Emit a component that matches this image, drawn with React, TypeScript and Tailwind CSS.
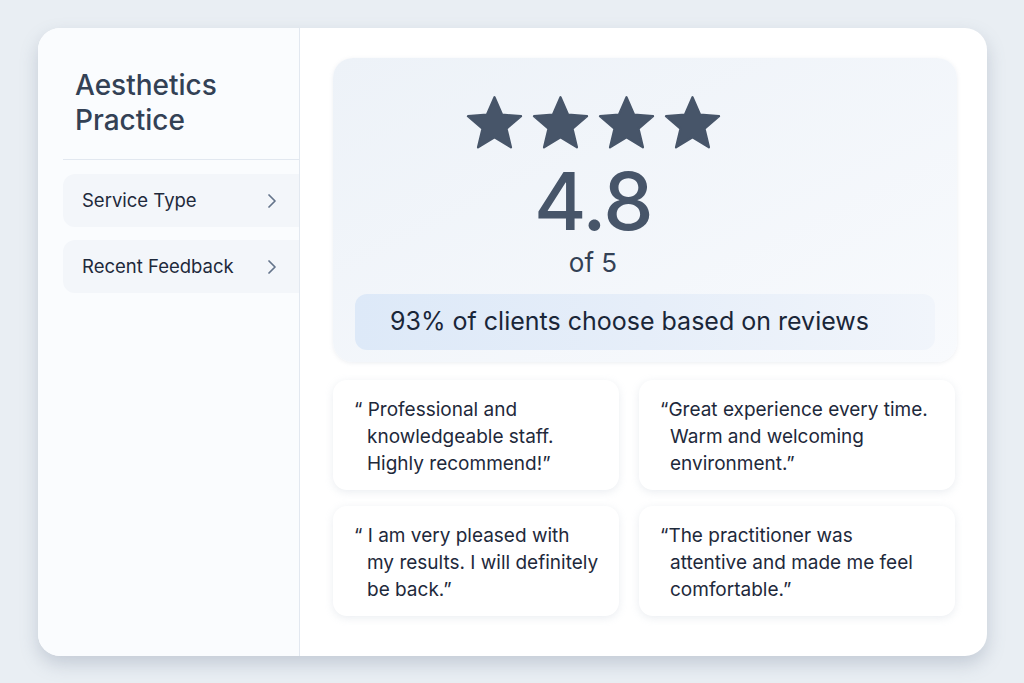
import React from 'react';
import { ChevronRight } from 'lucide-react';

const reviews = [
  {
    open: '“ ',
    lines: ['Professional and', 'knowledgeable staff.', 'Highly recommend!”'],
    indent: 'pl-[13px] -indent-[13px]',
  },
  {
    open: '“',
    lines: ['Great experience every time.', 'Warm and welcoming', 'environment.”'],
    indent: 'pl-[10px] -indent-[10px]',
  },
  {
    open: '“ ',
    lines: ['I am very pleased with', 'my results. I will definitely', 'be back.”'],
    indent: 'pl-[13px] -indent-[13px]',
  },
  {
    open: '“',
    lines: ['The practitioner was', 'attentive and made me feel', 'comfortable.”'],
    indent: 'pl-[10px] -indent-[10px]',
  },
];

function Star() {
  return (
    <svg viewBox="0 0 24 23" className="w-[59px] h-[57px]" aria-hidden="true">
      <path
        d="M12 1.2l3.1 7.1 7.7.6-5.9 5.1 1.8 7.6L12 17.5l-6.7 4.1 1.8-7.6-5.9-5.1 7.7-.6z"
        fill="#475569"
        stroke="#475569"
        strokeWidth="0.9"
        strokeLinejoin="round"
      />
    </svg>
  );
}

function NavItem({ label }: { label: string }) {
  return (
    <div className="flex items-center justify-between h-[53px] pl-[19px] pr-[15px] rounded-l-xl bg-[#f3f6fa]">
      <span className="text-[18.5px] text-[#1e293b]">{label}</span>
      <ChevronRight className="w-6 h-6 text-[#64748b]" strokeWidth={1.75} />
    </div>
  );
}

export default function App() {
  return (
    <div
      className="min-h-[683px] w-full bg-[#e9eef3] pt-[28px] pl-[38px]"
      style={{ fontFamily: 'Inter, "Noto Sans", sans-serif' }}
    >
      <div className="flex w-[949px] h-[628px] rounded-[22px] bg-white shadow-[0_8px_18px_rgba(100,116,139,0.28)] overflow-hidden">
        {/* Sidebar */}
        <aside className="w-[262px] shrink-0 border-r border-[#e2e8f0] bg-[#fafcfe] pl-[25px] pt-[40px]">
          <h1 className="pl-[12px] text-[28px] leading-[35px] font-medium text-[#334155]">
            Aesthetics<br />Practice
          </h1>
          <div className="mt-[21px] h-px bg-[#e2e8f0]" />
          <nav className="mt-[14px] flex flex-col gap-[13px]">
            <NavItem label="Service Type" />
            <NavItem label="Recent Feedback" />
          </nav>
        </aside>

        {/* Main */}
        <main className="flex-1 pt-[30px] pl-[33px] pr-[30px]">
          <section className="h-[304px] rounded-[20px] bg-gradient-to-br from-[#edf2f8] to-[#f8fafd] shadow-[0_1px_4px_rgba(148,163,184,0.18)] pt-[36px] px-[22px]">
            <div className="w-[476px] flex flex-col items-center">
              <div className="flex gap-[7px]">
                <Star />
                <Star />
                <Star />
                <Star />
              </div>
              <div className="mt-[10px] text-[80px] leading-[80px] font-medium text-[#475569] tracking-[-1.5px]">4.8</div>
              <div className="mt-[7px] text-[26px] leading-[30px] text-[#334155]">of 5</div>
            </div>
            <div className="mt-[16px] h-[56px] rounded-[12px] bg-gradient-to-r from-[#dde9f8] via-[#e6eef9] to-[#f1f5fb] flex items-center pl-[35px]">
              <span className="text-[25px] text-[#1a2638]">93% of clients choose based on reviews</span>
            </div>
          </section>

          <div className="mt-[18px] grid grid-cols-[286px_316px] gap-x-[20px] gap-y-[16px]">
            {reviews.map((r) => (
              <div
                key={r.lines[0]}
                className="h-[110px] rounded-[14px] bg-white shadow-[0_2px_8px_rgba(148,163,184,0.2)] pt-[16px] pl-[21px] pr-[10px]"
              >
                <p className={`${r.indent} text-[19px] leading-[27px] text-[#1e293b] whitespace-nowrap`}>
                  {r.open}
                  {r.lines.map((l, i) => (
                    <React.Fragment key={l}>
                      {i > 0 && <br />}
                      {l}
                    </React.Fragment>
                  ))}
                </p>
              </div>
            ))}
          </div>
        </main>
      </div>
    </div>
  );
}
